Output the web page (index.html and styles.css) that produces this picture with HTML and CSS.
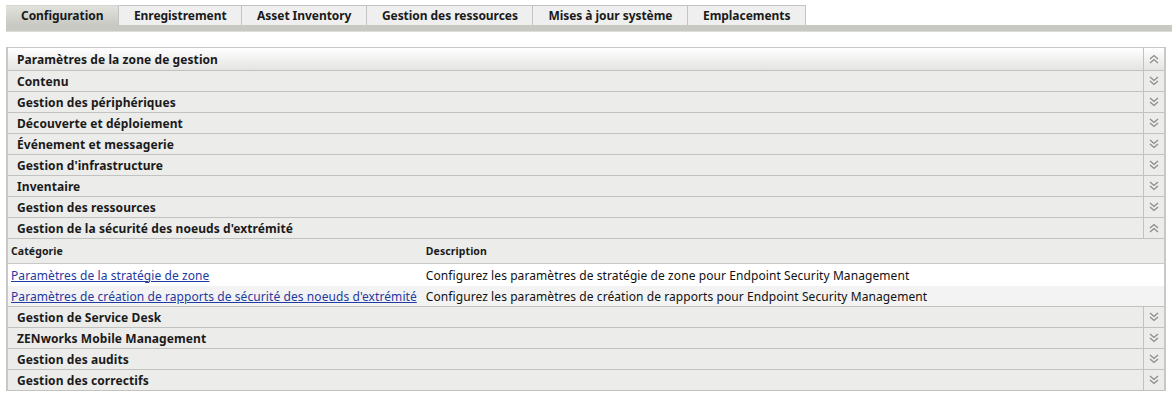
FILE: index.html
```html
<!DOCTYPE html>
<html lang="fr">
<head>
    <meta charset="UTF-8">
    <title>Configuration</title>
    <link rel="stylesheet" href="styles.css">
</head>
<body>

<div class="tab-strip">
    <div class="tabs">
        <a class="tab active">Configuration</a>
        <a class="tab">Enregistrement</a>
        <a class="tab">Asset Inventory</a>
        <a class="tab">Gestion des ressources</a>
        <a class="tab">Mises à jour système</a>
        <a class="tab">Emplacements</a>
    </div>
    <div class="tab-bar"></div>
</div>

<div class="panel">
    <div class="section head">
        <span class="label">Paramètres de la zone de gestion</span>
        <span class="toggle"><svg viewBox="0 0 10 10"><polyline points="1,5 5,1.5 9,5"/><polyline points="1,9 5,5.5 9,9"/></svg></span>
    </div>
    <div class="section"><span class="label">Contenu</span><span class="toggle down"></span></div>
    <div class="section"><span class="label">Gestion des périphériques</span><span class="toggle down"></span></div>
    <div class="section"><span class="label">Découverte et déploiement</span><span class="toggle down"></span></div>
    <div class="section"><span class="label">Événement et messagerie</span><span class="toggle down"></span></div>
    <div class="section"><span class="label">Gestion d'infrastructure</span><span class="toggle down"></span></div>
    <div class="section"><span class="label">Inventaire</span><span class="toggle down"></span></div>
    <div class="section"><span class="label">Gestion des ressources</span><span class="toggle down"></span></div>
    <div class="section">
        <span class="label">Gestion de la sécurité des noeuds d'extrémité</span>
        <span class="toggle"><svg viewBox="0 0 10 10"><polyline points="1,5 5,1.5 9,5"/><polyline points="1,9 5,5.5 9,9"/></svg></span>
    </div>

    <table class="settings">
        <thead>
        <tr>
            <th>Catégorie</th>
            <th>Description</th>
        </tr>
        </thead>
        <tbody>
        <tr class="row-odd">
            <td><a href="#">Paramètres de la stratégie de zone</a></td>
            <td>Configurez les paramètres de stratégie de zone pour Endpoint Security Management</td>
        </tr>
        <tr class="row-even">
            <td><a href="#">Paramètres de création de rapports de sécurité des noeuds d'extrémité</a></td>
            <td>Configurez les paramètres de création de rapports pour Endpoint Security Management</td>
        </tr>
        </tbody>
    </table>

    <div class="section"><span class="label">Gestion de Service Desk</span><span class="toggle down"></span></div>
    <div class="section"><span class="label">ZENworks Mobile Management</span><span class="toggle down"></span></div>
    <div class="section"><span class="label">Gestion des audits</span><span class="toggle down"></span></div>
    <div class="section"><span class="label">Gestion des correctifs</span><span class="toggle down"></span></div>
</div>

<script>
    // Fill the collapsed toggles with the double chevron pointing down
    document.querySelectorAll('.toggle.down').forEach(function (el) {
        el.innerHTML = '<svg viewBox="0 0 10 10"><polyline points="1,1 5,4.5 9,1"/><polyline points="1,5 5,8.5 9,5"/></svg>';
    });
</script>

</body>
</html>
```
FILE: styles.css
```css
body {
    font-family: "Noto Sans", "Liberation Sans", sans-serif;
    font-size: 12px;
    letter-spacing: 0.08px;
    color: #111;
    background-color: #fff;
    margin: 0;
    padding: 0;
}

/* Top navigation tabs */
.tab-strip {
    padding: 5px 0 0 6px;
}

.tabs {
    display: flex;
}

.tab {
    display: block;
    height: 20px;
    line-height: 20px;
    padding: 0 14.5px 0 15px;
    background-color: #efefef;
    border-top: 1px solid #c4c4c4;
    border-right: 1px solid #c4c4c4;
    box-sizing: border-box;
    font-weight: bold;
    letter-spacing: -0.05px;
    color: #1a1a1a;
    cursor: pointer;
}

.tab.active {
    background: linear-gradient(#e2e2dc, #c9c9c3);
    border-top-color: #d6d6d0;
}

.tab-bar {
    height: 6px;
    background-color: #c9c9c4;
    border-bottom: 1px solid #dcdcd8;
}

/* Collapsible panel */
.panel {
    margin: 15px 6px 0 6px;
    border-left: 2px solid #c8c8c6;
    border-right: 2px solid #c8c8c6;
}

.section {
    display: flex;
    height: 20px;
    background-color: #ececea;
    border-bottom: 1px solid #c2c2c0;
}

.section.head {
    height: 22px;
    background: linear-gradient(#ffffff, #e4e4e2);
    border-top: 1px solid #c8c8c6;
}

.section .label {
    flex: 1;
    display: flex;
    align-items: center;
    padding-left: 9px;
    font-weight: bold;
    color: #1a1a1a;
}

.toggle {
    width: 20px;
    display: flex;
    align-items: center;
    justify-content: center;
    border-left: 1px solid #c2c2c0;
}

.toggle svg {
    width: 10px;
    height: 10px;
    fill: none;
    stroke: #8c8c8c;
    stroke-width: 1.3;
}

/* Settings table */
table.settings {
    width: 100%;
    border-collapse: collapse;
}

.settings th {
    height: 24px;
    padding: 0 3px;
    text-align: left;
    font-size: 10.5px;
    font-weight: bold;
    color: #1a1a1a;
    background-color: #ececea;
    border-bottom: 1px solid #c8c8c6;
}

.settings td {
    padding: 0 3px;
    white-space: nowrap;
}

.settings td:last-child,
.settings th:last-child {
    width: 100%;
    padding-left: 6px;
}

.row-odd td {
    height: 22px;
    background-color: #fff;
}

.row-even td {
    height: 20px;
    background-color: #f3f3f3;
    border-bottom: 1px solid #c2c2c0;
}

.settings a {
    color: #1f3aa0;
    text-decoration: underline;
}
```
